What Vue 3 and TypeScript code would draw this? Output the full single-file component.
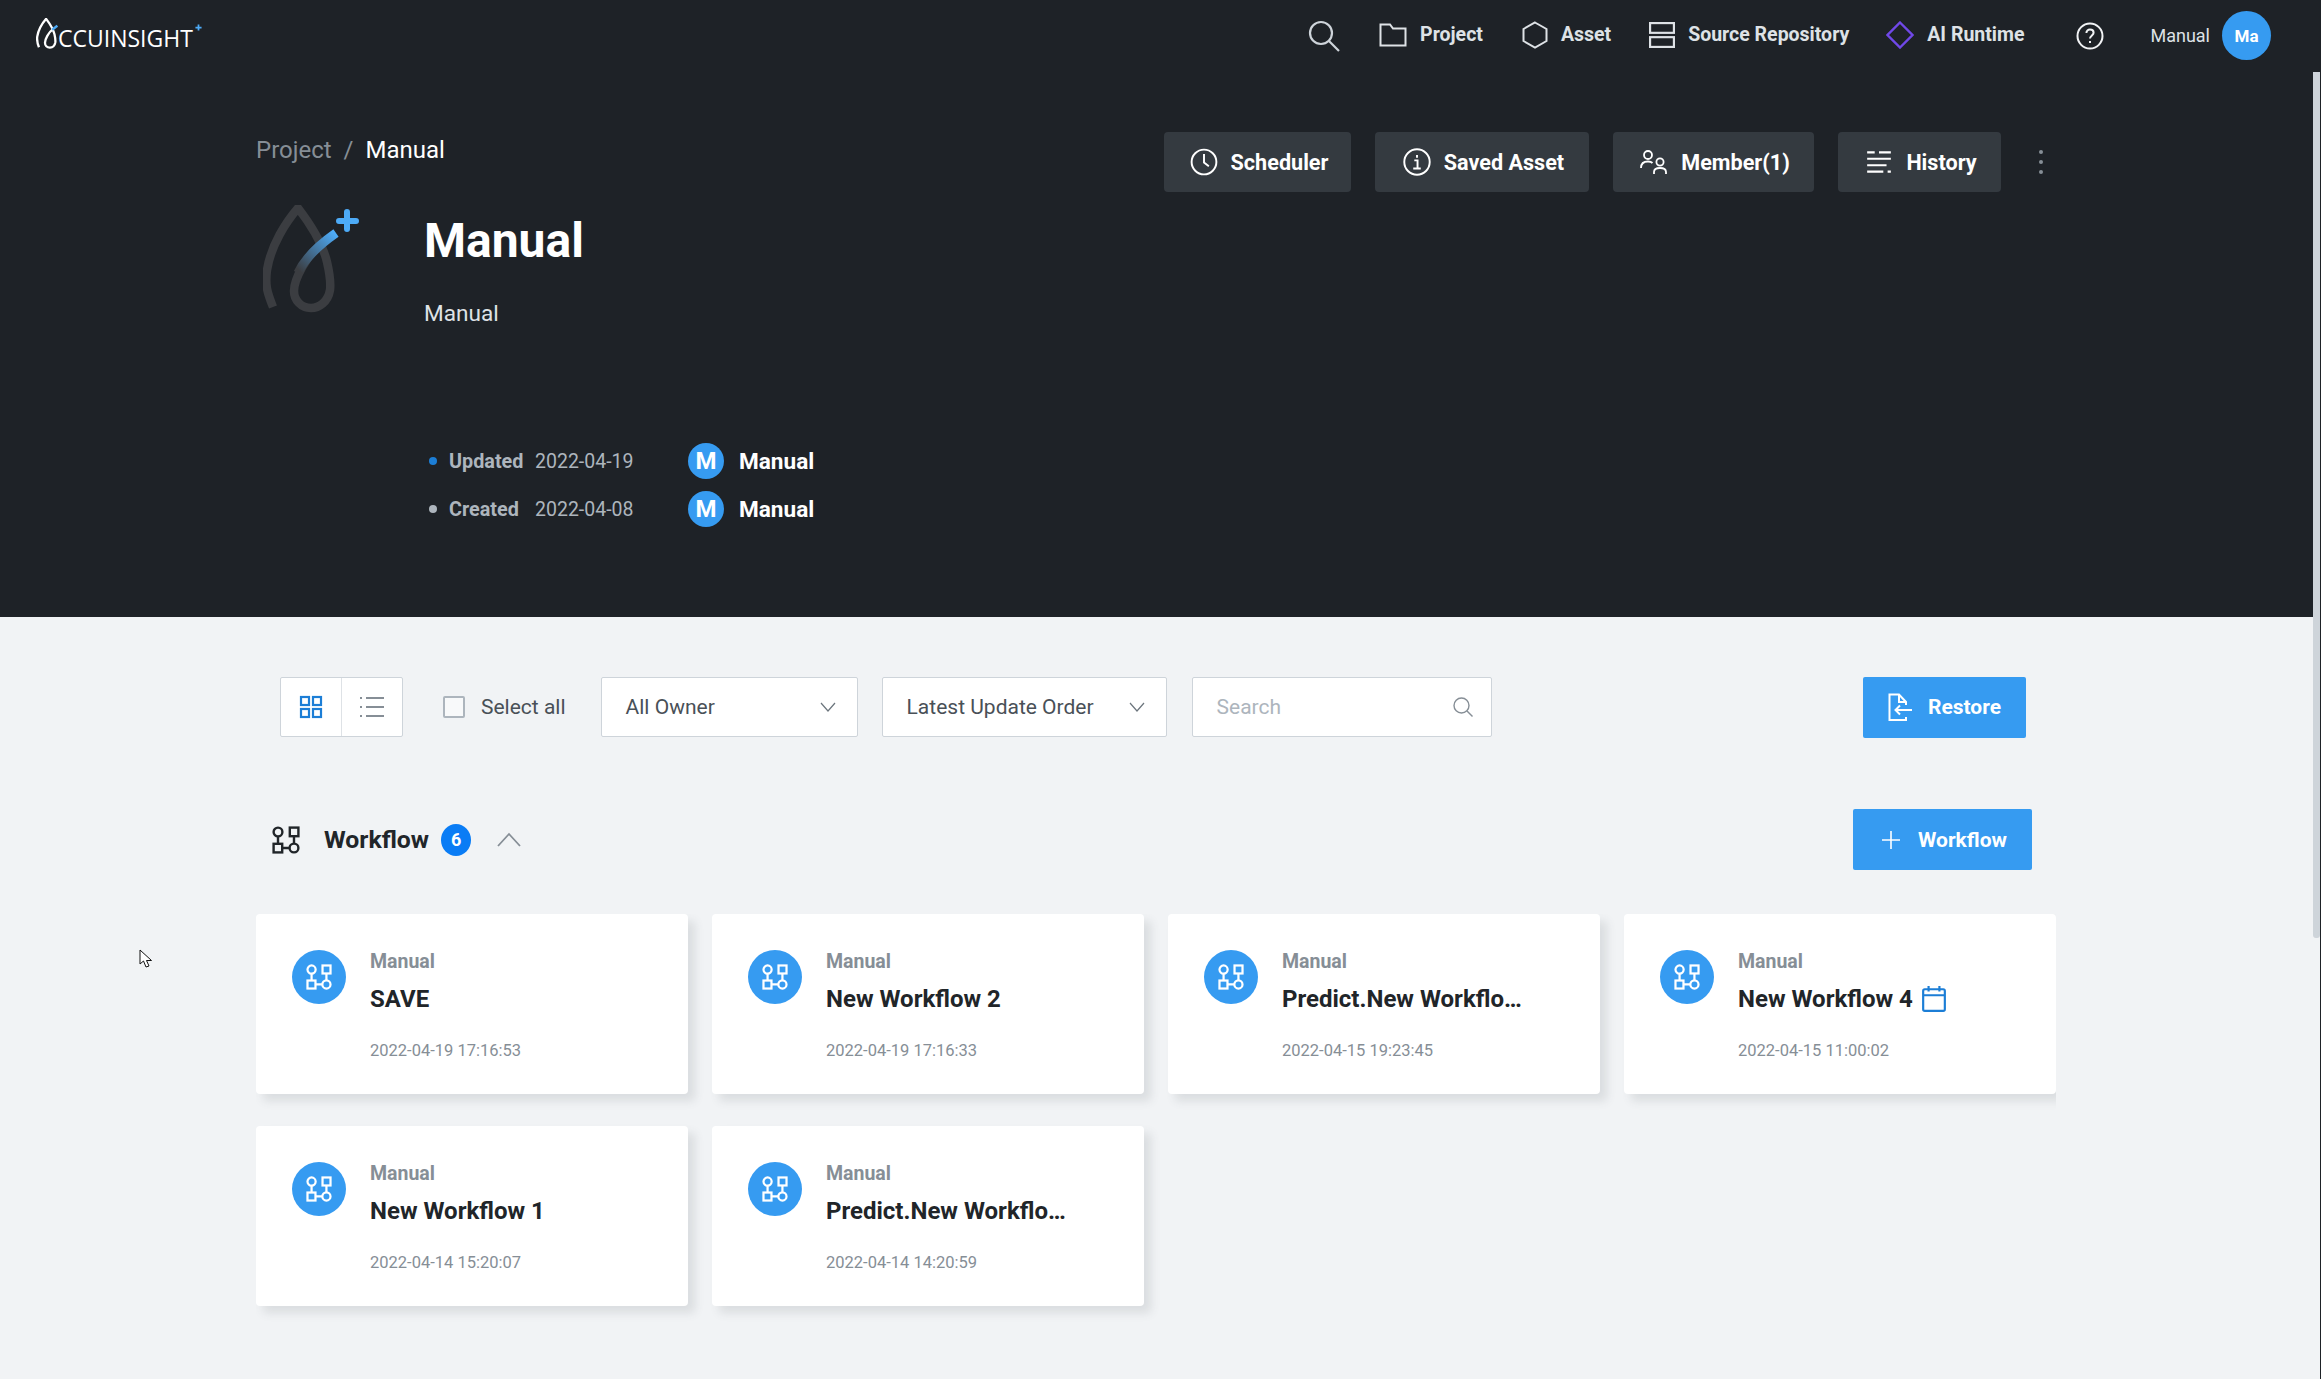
<template>
  <div class="page">
    <svg class="defs" width="0" height="0">
      <symbol id="wf" viewBox="0 0 28 28">
        <g fill="none" stroke="currentColor" stroke-width="2.4">
          <circle cx="6" cy="6" r="4.4" />
          <rect x="17.800" y="1.600" width="8.600" height="8.600" />
          <rect x="1.600" y="17.800" width="8.600" height="8.600" />
          <circle cx="22" cy="22" r="4.400" />
          <path d="M6 10.400V17.800M22 10.200V17.600M10.200 22H17.600" />
        </g>
      </symbol>
      <linearGradient id="tail" gradientUnits="userSpaceOnUse" x1="334" y1="234" x2="300" y2="272">
        <stop offset="0" stop-color="#4dabf7" />
        <stop offset="1" stop-color="#3b3d41" />
      </linearGradient>
    </svg>

    <section class="hero">
      <header class="topbar">
        <div class="logo">
          <svg class="logo-mark" viewBox="262 205 76 108">
            <path d="M272 307C266 292 264 285 266 270C270 245 285 222 297 208C310 225 322 245 326 262C329 275 330 282 329 290C327 302 318 308 310 308C300 308 293 300 293 291C293 280 305 255 322 243" fill="none" stroke="#fff" stroke-width="8" />
            <path d="M318 246L336 232" stroke="#4dabf7" stroke-width="8" />
          </svg>
          <span class="logo-text">CCUINSIGHT</span>
          <svg class="logo-plus" viewBox="0 0 8 8"><path d="M4 .5V7.5M.5 4H7.5" stroke="#4dabf7" stroke-width="2" /></svg>
        </div>
        <nav class="nav">
          <svg class="nav-search" viewBox="0 0 32 32" fill="none" stroke="#ced4da" stroke-width="2.2"><circle cx="13" cy="13" r="11" /><path d="M21 21L31 31" /></svg>
          <a class="nav-item project">
            <svg width="28" height="24" viewBox="0 0 28 24" fill="none" stroke="#dee2e6" stroke-width="2"><path d="M1.5 22.5V1.5H11L14 5.5H26.5V22.5Z" /></svg>
            Project
          </a>
          <a class="nav-item asset">
            <svg width="26" height="28" viewBox="0 0 26 28" fill="none" stroke="#dee2e6" stroke-width="2"><path d="M13 1.5L24.5 8V20L13 26.5L1.5 20V8Z" /></svg>
            Asset
          </a>
          <a class="nav-item source">
            <svg width="26" height="26" viewBox="0 0 24 24" fill="none" stroke="#dee2e6" stroke-width="2"><rect x="1" y="1" width="22" height="9" /><rect x="1" y="14" width="22" height="9" /></svg>
            Source Repository
          </a>
          <a class="nav-item runtime">
            <svg width="28" height="28" viewBox="0 0 28 28" fill="none" stroke="#7048e8" stroke-width="2.4"><path d="M14 1.5L26.5 14L14 26.5L1.5 14Z" /></svg>
            AI Runtime
          </a>
          <svg class="nav-help" viewBox="0 0 28 28" fill="none" stroke="#f1f3f5" stroke-width="2"><circle cx="14" cy="14" r="12.5" /><path d="M10.4 11C10.4 8.8 12 7.6 14 7.6C16 7.6 17.6 8.9 17.6 10.8C17.6 13.4 14 13.6 14 16.6" /><path d="M14 19V21" /></svg>
          <span class="nav-user">Manual</span>
          <span class="nav-avatar">Ma</span>
        </nav>
      </header>

      <div class="hero-body">
        <div class="hero-top">
          <div class="crumbs">
            <span class="crumb">Project</span>
            <span class="crumb sep">/</span>
            <span class="crumb current">Manual</span>
          </div>
          <div class="actions">
            <button class="action scheduler">
              <svg viewBox="0 0 26 26" fill="none" stroke="#fff" stroke-width="1.8"><circle cx="13" cy="13" r="11.5" /><path d="M13 5.5V13.5L17.5 17" /></svg>
              Scheduler
            </button>
            <button class="action saved">
              <svg viewBox="0 0 26 26" fill="none" stroke="#fff" stroke-width="1.8"><circle cx="13" cy="13" r="11.8" /><path d="M13 6.5V9M10.5 11.5H13.5V19M9.5 19H16.5" /></svg>
              Saved Asset
            </button>
            <button class="action member">
              <svg viewBox="0 0 28 26" fill="none" stroke="#fff" stroke-width="1.8"><circle cx="8" cy="6" r="4" /><path d="M1 19C1 14 4 12.5 8 12.5C10 12.5 11.5 13 12.5 14" /><circle cx="20" cy="13" r="3.6" /><path d="M14 25V23C14 20 16.500 19 20 19C23.500 19 26 20 26 23V25" /></svg>
              Member(1)
            </button>
            <button class="action history">
              <svg viewBox="0 0 26 24" fill="none" stroke="#fff" stroke-width="2"><path d="M2 3H9M13 3H24M2 9H24M2 15H20M2 21H17M21 21H24" /></svg>
              History
            </button>
            <span class="more"><i></i><i></i><i></i></span>
          </div>
        </div>

        <div class="project-head">
          <svg class="project-mark" viewBox="262 205 98 108">
            <path d="M272 307C266 292 264 285 266 270C270 245 285 222 297 208C310 225 322 245 326 262C329 275 330 282 329 290C327 302 318 308 310 308C300 308 293 300 293 291C293 280 305 255 322 243" fill="none" stroke="#3b3d41" stroke-width="8.5" />
            <path d="M297 273C303 260 315 247 335 233" fill="none" stroke="url(#tail)" stroke-width="9" />
            <path d="M346 212V229M338 221H355" stroke="#4dabf7" stroke-width="6" stroke-linecap="round" />
          </svg>
          <div class="project-info">
            <h1>Manual</h1>
            <p>Manual</p>
          </div>
        </div>

        <dl class="meta">
          <div v-for="row in metaRows" :key="row.label" class="meta-row">
            <span class="meta-dot" :class="{ active: row.active }"></span>
            <dt>{{ row.label }}</dt>
            <dd>{{ row.date }}</dd>
            <span class="meta-avatar">M</span>
            <strong>Manual</strong>
          </div>
        </dl>
      </div>
    </section>

    <main class="content">
      <div class="toolbar">
        <div class="view-toggle">
          <span class="view-btn">
            <svg width="24" height="24" viewBox="0 0 24 24" fill="none" stroke="#1c7ed6" stroke-width="2.2"><rect x="2" y="2" width="8" height="8" /><rect x="14" y="2" width="8" height="8" /><rect x="2" y="14" width="8" height="8" /><rect x="14" y="14" width="8" height="8" /></svg>
          </span>
          <span class="view-btn">
            <svg width="24" height="22" viewBox="0 0 24 22" fill="none" stroke="#868e96" stroke-width="2"><path d="M0 2H2M0 11H2M0 20H2M6 2H24M6 11H24M6 20H24" /></svg>
          </span>
        </div>
        <label class="check"><span class="box"></span>Select all</label>
        <div class="select owner">
          All Owner
          <svg width="16" height="10" viewBox="0 0 16 10" fill="none" stroke="#6c757d" stroke-width="1.2"><path d="M1 1L8 9L15 1" /></svg>
        </div>
        <div class="select order">
          Latest Update Order
          <svg width="16" height="10" viewBox="0 0 16 10" fill="none" stroke="#6c757d" stroke-width="1.2"><path d="M1 1L8 9L15 1" /></svg>
        </div>
        <div class="search">
          <span>Search</span>
          <svg width="20" height="20" viewBox="0 0 20 20" fill="none" stroke="#868e96" stroke-width="1.4"><circle cx="8.500" cy="8.500" r="7.500" /><path d="M14 14L19.500 19.500" /></svg>
        </div>
        <button class="primary restore">
          <svg width="24" height="28" viewBox="0 0 24 28" fill="none" stroke="#fff" stroke-width="2"><path d="M18 24V27H1.500V1.500H11L18 9V12M11 1.500V9H18M24 17H7.500M12 12.500L7.500 17L12 21.500" /></svg>
          Restore
        </button>
      </div>

      <div class="section-head">
        <svg class="section-icon" width="28" height="28"><use href="#wf" /></svg>
        <span class="section-title">Workflow</span>
        <span class="badge">6</span>
        <svg class="collapse" width="24" height="15" viewBox="0 0 24 15" fill="none" stroke="#868e96" stroke-width="1.8"><path d="M1 14L12 2L23 14" /></svg>
        <button class="primary add">
          <svg width="18" height="18" viewBox="0 0 18 18" stroke="#fff" stroke-width="1.6"><path d="M9 0V18M0 9H18" /></svg>
          Workflow
        </button>
      </div>

      <div class="cards">
        <article v-for="card in workflows" :key="card.date" class="card">
          <span class="card-icon"><svg width="26" height="26"><use href="#wf" /></svg></span>
          <div class="card-text">
            <span class="card-owner">Manual</span>
            <h3>
              {{ card.name }}
              <svg v-if="card.scheduled" width="24" height="26" viewBox="0 0 22 24" fill="none" stroke="#1c7ed6" stroke-width="2"><rect x="1" y="3" width="20" height="20" rx="1.500" /><path d="M1 8.500H21M6 0V5M16 0V5" /></svg>
            </h3>
            <time>{{ card.date }}</time>
          </div>
        </article>
      </div>
    </main>

    <div class="scrollbar"><span></span></div>
    <svg class="cursor" width="15" height="20" viewBox="0 0 15 20"><path d="M1 1V15L4.500 12L7 18L10 17L7.500 11.500H12.500Z" fill="#fff" stroke="#111" stroke-width="1" /></svg>
  </div>
</template>

<script setup lang="ts">
interface Workflow {
  name: string
  date: string
  scheduled?: boolean
}

const metaRows = [
  { label: 'Updated', date: '2022-04-19', active: true },
  { label: 'Created', date: '2022-04-08', active: false },
]

const workflows: Workflow[] = [
  { name: 'SAVE', date: '2022-04-19 17:16:53' },
  { name: 'New Workflow 2', date: '2022-04-19 17:16:33' },
  { name: 'Predict.New Workflo…', date: '2022-04-15 19:23:45' },
  { name: 'New Workflow 4', date: '2022-04-15 11:00:02', scheduled: true },
  { name: 'New Workflow 1', date: '2022-04-14 15:20:07' },
  { name: 'Predict.New Workflo…', date: '2022-04-14 14:20:59' },
]
</script>

<style>
html,
body {
  margin: 0;
  overflow: hidden;
}
</style>

<style scoped>
.page {
  position: relative;
  width: 2321px;
  height: 1379px;
  overflow: hidden;
  background: #f1f3f5;
  font-family: Roboto, 'Liberation Sans', sans-serif;
  color: #212529;
}

.defs {
  position: absolute;
}

.hero {
  height: 617px;
  background: #1e2227;
}

.topbar {
  display: flex;
  align-items: center;
  justify-content: space-between;
  height: 71px;
  padding-left: 36px;
  padding-right: 50px;
}

.logo {
  display: flex;
  align-items: flex-start;
  height: 36px;
}

.logo-mark {
  width: 22px;
  height: 31px;
}

.logo-text {
  margin-top: 3px;
  font-family: 'Open Sans', sans-serif;
  font-size: 23px;
  line-height: 34px;
  color: #fff;
}

.logo-plus {
  width: 7px;
  height: 7px;
  margin-top: 6px;
  margin-left: 2px;
}

.nav {
  display: flex;
  align-items: center;
}

.nav-item {
  display: flex;
  align-items: center;
  gap: 13px;
  margin-top: -2px;
  font-size: 19.5px;
  font-weight: 700;
  color: #dee2e6;
}

.nav-search {
  width: 32px;
  height: 32px;
  margin-right: 39px;
}

.project {
  margin-right: 39px;
}

.asset {
  margin-right: 38px;
}

.source {
  margin-right: 37px;
}

.runtime {
  margin-right: 52px;
}

.nav-help {
  width: 28px;
  height: 28px;
  margin-right: 46px;
}

.nav-user {
  margin-right: 12px;
  font-size: 18px;
  color: #dee2e6;
}

.nav-avatar {
  display: flex;
  align-items: center;
  justify-content: center;
  width: 49px;
  height: 49px;
  border-radius: 50%;
  background: #369bf1;
  font-size: 17px;
  font-weight: 700;
  color: #fff;
}

.hero-body {
  padding-left: 256px;
  padding-right: 278px;
}

.hero-top {
  display: flex;
  justify-content: space-between;
  height: 134px;
  padding-top: 61px;
  box-sizing: border-box;
}

.crumbs {
  display: flex;
  gap: 12px;
  font-size: 24px;
  line-height: 28px;
  margin-top: 4px;
}

.crumb {
  color: #868e96;
}

.crumb.current {
  color: #fff;
}

.actions {
  display: flex;
  align-items: flex-start;
  gap: 24px;
}

.action {
  display: flex;
  align-items: center;
  justify-content: center;
  gap: 13px;
  height: 60px;
  padding: 0 0 0 3px;
  border: 0;
  border-radius: 4px;
  background: #343a40;
  font-family: inherit;
  font-size: 21.6px;
  font-weight: 700;
  color: #fff;
}

.action svg {
  width: 28px;
  height: 28px;
}

.scheduler {
  width: 187px;
}

.saved {
  width: 214px;
}

.member {
  width: 201px;
}

.history {
  width: 163px;
}

.more {
  display: flex;
  flex-direction: column;
  gap: 6px;
  margin-left: 14px;
  padding-top: 18px;
}

.more i {
  width: 4px;
  height: 4px;
  border-radius: 50%;
  background: #868e96;
}

.project-head {
  display: flex;
  align-items: flex-start;
}

.project-mark {
  width: 98px;
  height: 108px;
  margin-left: 7px;
}

.project-info {
  margin-top: 1px;
  margin-left: 63px;
}

.project-info h1 {
  margin: 0;
  font-size: 48px;
  line-height: 70px;
  font-weight: 700;
  color: #fff;
}

.project-info p {
  margin: 24px 0 0;
  font-size: 22.6px;
  line-height: 28px;
  color: #dee2e6;
}

.meta {
  margin: 0;
  padding-top: 109px;
  padding-left: 173px;
}

.meta-row {
  display: flex;
  align-items: center;
  height: 48px;
}

.meta-dot {
  width: 8px;
  height: 8px;
  border-radius: 50%;
  background: #adb5bd;
}

.meta-dot.active {
  background: #1c7ed6;
}

.meta-row dt {
  width: 86px;
  margin-left: 12px;
  font-size: 19.8px;
  font-weight: 700;
  color: #adb5bd;
}

.meta-row dd {
  width: 153px;
  margin: 0;
  font-size: 19.5px;
  color: #adb5bd;
}

.meta-avatar {
  display: flex;
  align-items: center;
  justify-content: center;
  width: 36px;
  height: 36px;
  border-radius: 50%;
  background: #369bf1;
  font-size: 24px;
  font-weight: 700;
  color: #fff;
}

.meta-row strong {
  margin-left: 15px;
  font-size: 22.6px;
  font-weight: 700;
  color: #fff;
}

.content {
  width: 1800px;
  margin-left: 256px;
}

.toolbar {
  display: flex;
  align-items: center;
  height: 60px;
  padding-top: 60px;
  padding-left: 24px;
}

.view-toggle {
  display: flex;
  width: 123px;
  height: 60px;
  box-sizing: border-box;
  border: 1px solid #ced4da;
  border-radius: 2px;
  background: #fff;
}

.view-btn {
  display: flex;
  flex: 1;
  align-items: center;
  justify-content: center;
}

.view-btn + .view-btn {
  border-left: 1px solid #dee2e6;
}

.check {
  display: flex;
  align-items: center;
  gap: 16px;
  margin-left: 40px;
  font-size: 21px;
  color: #495057;
}

.box {
  width: 22px;
  height: 22px;
  box-sizing: border-box;
  border: 2px solid #adb5bd;
  border-radius: 2px;
  background: #f8f9fa;
}

.select,
.search {
  display: flex;
  align-items: center;
  justify-content: space-between;
  height: 60px;
  box-sizing: border-box;
  padding: 0 21px 0 24px;
  border: 1px solid #ced4da;
  border-radius: 2px;
  background: #fff;
  font-size: 21px;
  color: #495057;
}

.owner {
  width: 257px;
  margin-left: 35px;
}

.order {
  width: 285px;
  margin-left: 24px;
}

.search {
  width: 300px;
  margin-left: 25px;
  padding-right: 18px;
  color: #adb5bd;
}

.primary {
  display: flex;
  align-items: center;
  justify-content: center;
  border: 0;
  border-radius: 2px;
  background: #369bf1;
  font-family: inherit;
  font-size: 21px;
  font-weight: 700;
  color: #fff;
}

.restore {
  width: 163px;
  height: 61px;
  gap: 16px;
  margin-left: auto;
  margin-right: 30px;
}

.section-head {
  display: flex;
  align-items: center;
  height: 61px;
  margin-top: 72px;
  padding-left: 16px;
}

.section-icon {
  color: #212529;
}

.section-title {
  margin-left: 24px;
  font-size: 24.8px;
  font-weight: 700;
}

.badge {
  display: flex;
  align-items: center;
  justify-content: center;
  width: 30px;
  height: 32px;
  margin-left: 12px;
  border-radius: 50%;
  background: #0a7cf5;
  font-size: 18px;
  font-weight: 700;
  color: #fff;
}

.collapse {
  margin-left: 26px;
}

.add {
  width: 179px;
  height: 61px;
  gap: 18px;
  padding: 0 0 0 4px;
  margin-left: auto;
  margin-right: 24px;
}

.cards {
  display: grid;
  grid-template-columns: repeat(4, 432px);
  column-gap: 24px;
  row-gap: 32px;
  margin-top: 44px;
  padding-bottom: 30px;
  overflow: hidden;
}

.card {
  display: flex;
  height: 180px;
  box-sizing: border-box;
  padding: 36px 0 0 36px;
  border-radius: 4px;
  background: #fff;
  box-shadow: 7px 7px 10px rgba(73, 80, 87, 0.13);
}

.card-icon {
  display: flex;
  flex: none;
  align-items: center;
  justify-content: center;
  width: 54px;
  height: 54px;
  border-radius: 50%;
  background: #369bf1;
  color: #fff;
}

.card-text {
  display: flex;
  flex-direction: column;
  align-items: flex-start;
  margin-left: 24px;
}

.card-owner {
  margin-top: -1px;
  font-size: 19.5px;
  line-height: 26px;
  font-weight: 700;
  color: #868e96;
}

.card-text h3 {
  display: flex;
  align-items: center;
  gap: 9px;
  margin: 9px 0 0;
  font-size: 24px;
  line-height: 30px;
  font-weight: 700;
  color: #212529;
}

.card-text time {
  margin-top: 26px;
  font-size: 16.5px;
  line-height: 22px;
  color: #868e96;
}

.scrollbar {
  position: absolute;
  top: 0;
  right: 0;
  bottom: 0;
  width: 1px;
  background: #1e2227;
}

.scrollbar span {
  position: absolute;
  top: 72px;
  right: 1px;
  width: 7px;
  height: 866px;
  border-radius: 0 0 3px 3px;
  background: #ced4da;
}

.cursor {
  position: absolute;
  top: 949px;
  left: 139px;
}
</style>
